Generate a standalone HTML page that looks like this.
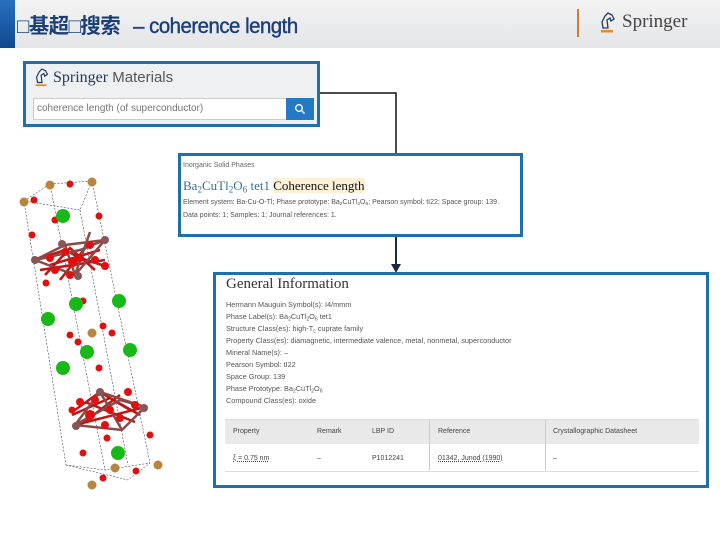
<!DOCTYPE html>
<html><head><meta charset="utf-8"><style>
*{margin:0;padding:0;box-sizing:border-box}
body{width:720px;height:540px;background:#fff;position:relative;overflow:hidden;font-family:"Liberation Sans",sans-serif}
sub{font-size:70%;line-height:0;vertical-align:-0.25em}
.hdr{position:absolute;left:0;top:0;width:720px;height:48px;background:linear-gradient(#f3f3f3,#e4e5e7)}
.strip{position:absolute;left:0;top:0;width:15px;height:48px;background:linear-gradient(#2a6fc0,#0f4a8f)}
.title{position:absolute;left:17px;top:10px;font:bold 21px "Liberation Sans","Noto Sans CJK SC",sans-serif;color:#1a3e78;white-space:nowrap;letter-spacing:-0.5px;transform:scaleX(0.97);transform-origin:left}
.title span{font-family:"Liberation Sans",sans-serif;font-weight:normal;-webkit-text-stroke:0.4px #1a3e78}
.vl{position:absolute;left:577px;top:9px;width:2px;height:28px;background:#c9803a}
.box{position:absolute;border:3px solid #1f6fae}
.sp{font-family:"Liberation Serif",serif;color:#23395b}
.t{position:absolute;white-space:nowrap;color:#444}
</style></head><body>
<div class="hdr"></div><div class="strip"></div>
<div class="title">□基超□搜索 <span style="margin-left:8px">– coherence length</span></div>
<div class="vl"></div>
<svg style="position:absolute;left:598px;top:10px" width="20" height="26" viewBox="0 0 20 26"><path d="M5 18 L4 12 L7 6 L10 3 L14 5 L16 9 L13 11 L12 8 L9 10 L10 18 Z" fill="none" stroke="#23395b" stroke-width="1.3"/><rect x="3" y="20" width="12" height="2.5" fill="#e2892f"/></svg>
<div class="t sp" style="left:622px;top:11px;font-size:19px">Springer</div>

<div class="box" style="left:23px;top:61px;width:297px;height:66px;background:#eef0f2"></div>
<svg style="position:absolute;left:33px;top:66px" width="18" height="24" viewBox="0 0 20 26"><path d="M5 18 L4 12 L7 6 L10 3 L14 5 L16 9 L13 11 L12 8 L9 10 L10 18 Z" fill="none" stroke="#23395b" stroke-width="1.3"/><rect x="3" y="20" width="12" height="2" fill="#e2892f"/></svg>
<div class="t" style="left:53px;top:69px;font-size:16px"><span class="sp">Springer</span><span style="color:#555;font-size:15px"> Materials</span></div>
<div style="position:absolute;left:33px;top:98px;width:254px;height:22px;background:#fff;border:1px solid #ccc"></div>
<div class="t" style="left:37px;top:103px;font-size:10px;color:#777">coherence length (of superconductor)</div>
<div style="position:absolute;left:286px;top:98px;width:28px;height:22px;background:#2379c4"></div>
<svg style="position:absolute;left:294px;top:103px" width="12" height="12"><circle cx="5" cy="5" r="3.3" fill="none" stroke="#fff" stroke-width="1.3"/><path d="M7.5 7.5 L10.5 10.5" stroke="#fff" stroke-width="1.5"/></svg>

<svg style="position:absolute;left:0;top:0" width="720" height="540">
<path d="M320 93 H396 V153" stroke="#111" stroke-width="1.5" fill="none"/>
<path d="M396 236 V266" stroke="#1a2a40" stroke-width="2" fill="none"/>
<path d="M391 264 L396 273 L401 264 Z" fill="#1a2a40"/>
</svg>

<div class="box" style="left:178px;top:153px;width:345px;height:84px;background:#fff"></div>
<div class="t" style="left:183px;top:162px;font-size:7px;color:#666">Inorganic Solid Phases</div>
<div class="t" style="left:183px;top:178px;font:13px 'Liberation Serif',serif;color:#3a6e9a">Ba<sub>2</sub>CuTl<sub>2</sub>O<sub>6</sub> tet1 <span style="color:#111;background:#fdf2d6">Coherence length</span></div>
<div class="t" style="left:183px;top:199px;font-size:7px;color:#555">Element system: Ba-Cu-O-Tl; Phase prototype: Ba<sub>2</sub>CuTl<sub>2</sub>O<sub>6</sub>; Pearson symbol: tI22; Space group: 139.</div>
<div class="t" style="left:183px;top:212px;font-size:7px;color:#555">Data points: 1; Samples: 1; Journal references: 1.</div>

<div class="box" style="left:213px;top:272px;width:496px;height:216px;background:#fff"></div>
<div class="t" style="left:226px;top:276px;font:15px 'Liberation Serif',serif;color:#333">General Information</div>
<div style="position:absolute;left:226px;top:299px;font-size:7.3px;color:#555;line-height:12px">
Hermann Mauguin Symbol(s): I4/mmm<br>Phase Label(s): Ba<sub>2</sub>CuTl<sub>2</sub>O<sub>6</sub> tet1<br>Structure Class(es): high-T<sub>c</sub> cuprate family<br>Property Class(es): diamagnetic, intermediate valence, metal, nonmetal, superconductor<br>Mineral Name(s): –<br>Pearson Symbol: tI22<br>Space Group: 139<br>Phase Prototype: Ba<sub>2</sub>CuTl<sub>2</sub>O<sub>6</sub><br>Compound Class(es): oxide</div>
<div style="position:absolute;left:225px;top:419px;width:474px;height:25px;background:#e9e9e9;border-top:1px solid #ddd"></div>
<div style="position:absolute;left:225px;top:471px;width:474px;height:1px;background:#ddd"></div>
<div style="position:absolute;left:429px;top:419px;width:1px;height:52px;background:#ccc"></div>
<div style="position:absolute;left:545px;top:419px;width:1px;height:52px;background:#ccc"></div>
<div class="t" style="left:233px;top:428px;font-size:7px">Property</div>
<div class="t" style="left:317px;top:428px;font-size:7px">Remark</div>
<div class="t" style="left:372px;top:428px;font-size:7px">LBP ID</div>
<div class="t" style="left:438px;top:428px;font-size:7px">Reference</div>
<div class="t" style="left:553px;top:428px;font-size:7px">Crystallographic Datasheet</div>
<div class="t" style="left:233px;top:455px;font-size:7px;text-decoration:underline dotted">ξ = 0.75 nm</div>
<div class="t" style="left:317px;top:455px;font-size:7px">–</div>
<div class="t" style="left:372px;top:455px;font-size:7px">P1012241</div>
<div class="t" style="left:438px;top:455px;font-size:7px;text-decoration:underline dotted">01342, Junod (1990)</div>
<div class="t" style="left:553px;top:455px;font-size:7px">–</div>

<svg style="position:absolute;left:10px;top:170px" width="170" height="330" viewBox="0 0 170 330">
<g stroke="#223" stroke-width="0.5" stroke-dasharray="2,1.5" fill="none">
<path d="M14 31 L56 295 M40 14 L95 300 M82 11 L140 293 M70 40 L118 295 M14 31 L40 14 L82 11 L70 40 Z M56 295 L95 300 L140 293 L118 310 Z"/>
</g>
<g stroke="#c01515" stroke-width="2.5" fill="none">
<path d="M25 90 L55 80 L70 88 L95 96 M35 105 L60 78 L85 100 M40 95 L90 80 M50 110 L80 72 M30 100 L95 90"/>
<path d="M65 240 L90 222 L120 240 M62 245 L100 228 L130 245 M70 255 L110 225 M75 232 L125 252 M65 255 L135 237"/>
</g>
<g stroke="#8a4a4a" stroke-width="2.5" fill="none">
<path d="M25 90 L65 105 L95 70 L55 75 Z M25 90 L70 80 L95 70 M65 105 L55 75 M65 105 L80 62"/>
<path d="M65 255 L90 222 L135 237 L112 260 Z M65 255 L110 230 L135 237 M90 222 L112 260"/>
</g>
<g fill="#e01010">
<circle cx="24" cy="30" r="3.5"/><circle cx="60" cy="14" r="3.5"/><circle cx="45" cy="50" r="3.5"/><circle cx="89" cy="46" r="3.5"/><circle cx="22" cy="65" r="3.5"/><circle cx="55" cy="82" r="4"/><circle cx="70" cy="88" r="4"/><circle cx="80" cy="75" r="4"/><circle cx="95" cy="96" r="4"/><circle cx="45" cy="100" r="4"/><circle cx="36" cy="113" r="3.5"/><circle cx="73" cy="131" r="3.5"/><circle cx="63" cy="92" r="5"/><circle cx="85" cy="90" r="4"/><circle cx="40" cy="88" r="4"/><circle cx="60" cy="105" r="4"/>
<circle cx="60" cy="165" r="3.5"/><circle cx="93" cy="156" r="3.5"/><circle cx="102" cy="163" r="3.5"/><circle cx="68" cy="172" r="3.5"/>
<circle cx="89" cy="198" r="3.5"/><circle cx="70" cy="232" r="4"/><circle cx="80" cy="245" r="5"/><circle cx="100" cy="240" r="4"/><circle cx="118" cy="222" r="4"/><circle cx="95" cy="255" r="4"/><circle cx="62" cy="240" r="3.5"/><circle cx="97" cy="268" r="3.5"/><circle cx="140" cy="265" r="3.5"/><circle cx="73" cy="283" r="3.5"/><circle cx="93" cy="308" r="3.5"/><circle cx="126" cy="301" r="3.5"/><circle cx="110" cy="248" r="4"/><circle cx="125" cy="235" r="4"/><circle cx="85" cy="230" r="4"/>
</g>
<g fill="#8b5555"><circle cx="52" cy="74" r="4"/><circle cx="95" cy="70" r="4"/><circle cx="25" cy="90" r="4"/><circle cx="68" cy="106" r="4"/><circle cx="90" cy="222" r="4"/><circle cx="134" cy="238" r="4"/><circle cx="66" cy="256" r="4"/></g>
<g fill="#b8843e"><circle cx="14" cy="32" r="4.5"/><circle cx="40" cy="15" r="4.5"/><circle cx="82" cy="12" r="4.5"/><circle cx="82" cy="163" r="4.5"/><circle cx="105" cy="298" r="4.5"/><circle cx="148" cy="295" r="4.5"/><circle cx="82" cy="315" r="4.5"/></g>
<g fill="#18b818"><circle cx="53" cy="46" r="7"/><circle cx="66" cy="134" r="7"/><circle cx="109" cy="131" r="7"/><circle cx="38" cy="149" r="7"/><circle cx="77" cy="182" r="7"/><circle cx="120" cy="180" r="7"/><circle cx="53" cy="198" r="7"/><circle cx="108" cy="283" r="7"/></g>
</svg>
</body></html>
